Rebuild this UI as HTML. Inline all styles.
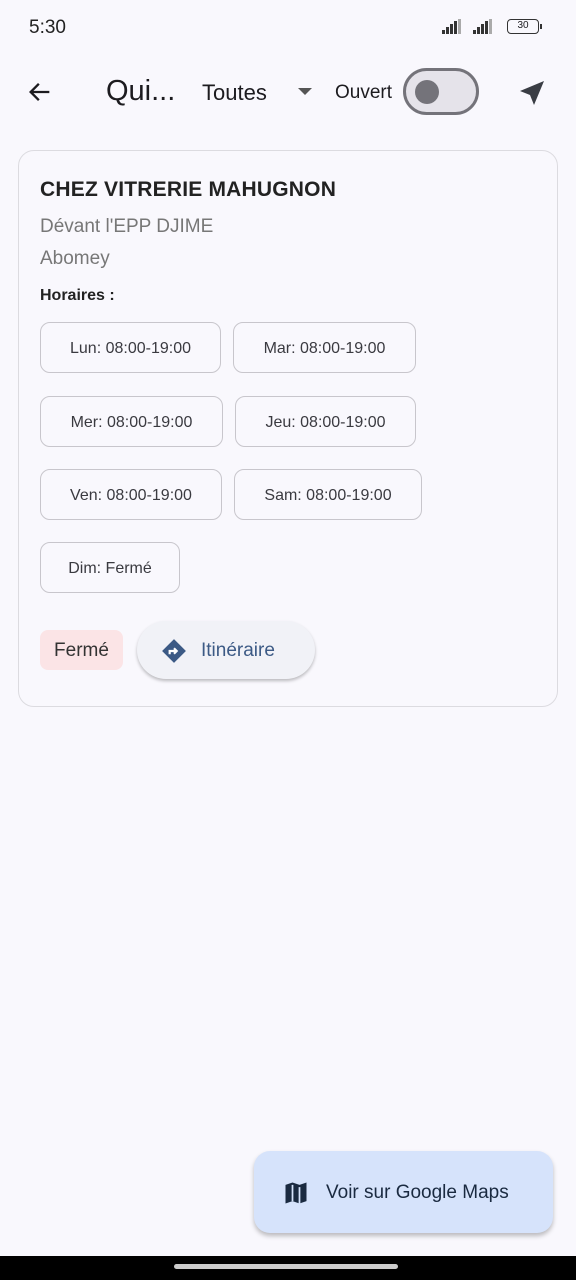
<!DOCTYPE html>
<html><head><meta charset="utf-8"><style>
*{box-sizing:border-box;margin:0;padding:0}
body{width:576px;height:1280px;background:#f9f8fd;font-family:"Liberation Sans",sans-serif;position:relative;overflow:hidden;color:#1c1b1f}
.a{position:absolute}
.chip{position:absolute;height:51px;border:1.5px solid #c8c6cc;border-radius:10px;font-size:16px;color:#3a3a40;display:flex;align-items:center;justify-content:center;padding-top:2px}
.b{position:absolute;width:2.5px;background:#333;bottom:0}
</style></head><body>
<div class="a" style="left:29px;top:17px;font-size:19px;color:#222">5:30</div>
<div class="a" style="left:442px;top:19px;width:24px;height:15px">
<div class="b" style="left:0;height:4px"></div><div class="b" style="left:4px;height:7px"></div><div class="b" style="left:8px;height:10px"></div><div class="b" style="left:12px;height:13px"></div><div class="b" style="left:16px;height:15px;background:#aaa"></div></div>
<div class="a" style="left:473px;top:19px;width:24px;height:15px">
<div class="b" style="left:0;height:4px"></div><div class="b" style="left:4px;height:7px"></div><div class="b" style="left:8px;height:10px"></div><div class="b" style="left:12px;height:13px"></div><div class="b" style="left:16px;height:15px;background:#aaa"></div></div>
<div class="a" style="left:507px;top:19px;width:32px;height:15px;border:1.5px solid #333;border-radius:4px;font-size:10px;text-align:center;line-height:12px">30</div>
<div class="a" style="left:540px;top:24px;width:2px;height:5px;background:#333"></div>
<svg class="a" style="left:26px;top:78px" width="28" height="28" viewBox="0 0 24 24"><path d="M20 12H5M11 5l-7 7 7 7" stroke="#1c1b1f" stroke-width="2" fill="none"/></svg>
<div class="a" style="left:106px;top:75px;font-size:29px;color:#1c1b1f">Qui...</div>
<div class="a" style="left:202px;top:80px;font-size:22px">Toutes</div>
<div class="a" style="left:298px;top:88px;width:0;height:0;border-left:7px solid transparent;border-right:7px solid transparent;border-top:7px solid #555"></div>
<div class="a" style="left:335px;top:82px;font-size:19px">Ouvert</div>
<div class="a" style="left:403px;top:68px;width:76px;height:47px;border:3px solid #74737a;border-radius:24px;background:#e5e3ea"></div>
<div class="a" style="left:415px;top:80px;width:24px;height:24px;border-radius:50%;background:#74737a"></div>
<svg class="a" style="left:516px;top:77px" width="32" height="32" viewBox="0 0 24 24"><path d="M21 3L3 10.5l7.5 3 3 7.5z" fill="#3a3d44"/></svg>
<div class="a" style="left:18px;top:150px;width:540px;height:557px;border:1px solid #dcdbe0;border-radius:16px;background:#f9f8fd"></div>
<div class="a" style="left:40px;top:178px;font-size:21px;font-weight:bold;color:#222;letter-spacing:.2px">CHEZ VITRERIE MAHUGNON</div>
<div class="a" style="left:40px;top:216px;font-size:19px;color:#777">Dévant l'EPP DJIME</div>
<div class="a" style="left:40px;top:248px;font-size:19px;color:#777">Abomey</div>
<div class="a" style="left:40px;top:287px;font-size:16px;font-weight:bold;color:#222">Horaires :</div>
<div class="chip" style="left:40px;top:322px;width:181px">Lun: 08:00-19:00</div>
<div class="chip" style="left:233px;top:322px;width:183px">Mar: 08:00-19:00</div>
<div class="chip" style="left:40px;top:396px;width:183px">Mer: 08:00-19:00</div>
<div class="chip" style="left:235px;top:396px;width:181px">Jeu: 08:00-19:00</div>
<div class="chip" style="left:40px;top:469px;width:182px">Ven: 08:00-19:00</div>
<div class="chip" style="left:234px;top:469px;width:188px">Sam: 08:00-19:00</div>
<div class="chip" style="left:40px;top:542px;width:140px">Dim: Fermé</div>
<div class="a" style="left:40px;top:630px;width:83px;height:40px;background:#fbe4e6;border-radius:8px;font-size:19px;display:flex;align-items:center;justify-content:center;color:#333;padding-top:2px">Fermé</div>
<div class="a" style="left:137px;top:621px;width:178px;height:58px;background:#f1f2f7;border-radius:29px;box-shadow:0 2px 3px rgba(0,0,0,.25);display:flex;align-items:center;font-size:19px;color:#3c5a85;padding-top:2px">
<svg style="margin-left:24px;margin-right:14px" width="26" height="26" viewBox="0 0 24 24"><path d="M12 1l11 11-11 11L1 12z" fill="#3c5a85"/><path d="M8 15v-3h6M12 9.5l2.5 2.5-2.5 2.5" stroke="#fff" stroke-width="2" fill="none"/></svg>Itinéraire</div>
<div class="a" style="left:254px;top:1151px;width:299px;height:82px;background:#d6e3fb;border-radius:16px;box-shadow:0 3px 5px rgba(0,0,0,.25);display:flex;align-items:center;font-size:19px;color:#1a2a40;padding-top:2px">
<svg style="margin-left:28px;margin-right:16px" width="28" height="28" viewBox="0 0 24 24"><path d="M3 5l6-2 6 2 6-2v16l-6 2-6-2-6 2z" fill="#1a2a40"/><path d="M9 5v14M15 7v14" stroke="#d6e3fb" stroke-width="1.5"/></svg>Voir sur Google Maps</div>
<div class="a" style="left:0;top:1256px;width:576px;height:24px;background:#000"></div>
<div class="a" style="left:174px;top:1264px;width:224px;height:5px;border-radius:3px;background:#ccc"></div>
</body></html>
